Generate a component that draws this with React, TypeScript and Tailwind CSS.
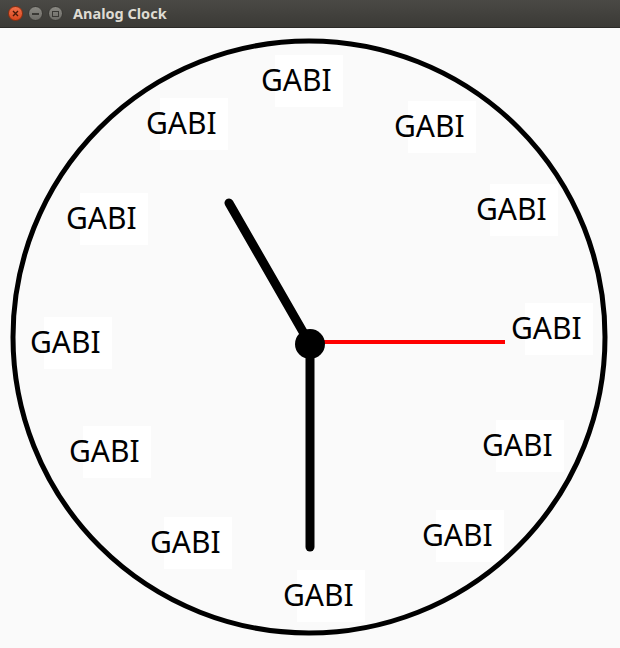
const labels = [
  { x: 263, y: 91 },
  { x: 396, y: 137 },
  { x: 478, y: 220 },
  { x: 513, y: 339 },
  { x: 484, y: 456 },
  { x: 424, y: 546 },
  { x: 285, y: 606 },
  { x: 152, y: 553 },
  { x: 71, y: 462 },
  { x: 32, y: 353 },
  { x: 68, y: 229 },
  { x: 148, y: 134 },
]

function TitleBar() {
  return (
    <div className="h-[28px] flex items-center bg-gradient-to-b from-[#4a4945] to-[#3b3a36] border-b border-[#2b2a27]">
      <div className="flex items-center gap-[5px] pl-[8px]">
        <div className="w-[15px] h-[15px] rounded-full bg-gradient-to-b from-[#f0704a] to-[#d8461b] border border-[#8e2e0e] flex items-center justify-center">
          <svg width="7" height="7" viewBox="0 0 7 7">
            <path d="M1 1L6 6M6 1L1 6" stroke="#4a1a08" strokeWidth="1.4" />
          </svg>
        </div>
        <div className="w-[15px] h-[15px] rounded-full bg-gradient-to-b from-[#8a8983] to-[#6d6c67] border border-[#3a3935] flex items-center justify-center">
          <div className="w-[7px] h-[2px] bg-[#3a3935]" />
        </div>
        <div className="w-[15px] h-[15px] rounded-full bg-gradient-to-b from-[#8a8983] to-[#6d6c67] border border-[#3a3935] flex items-center justify-center">
          <div className="w-[7px] h-[6px] border border-[#3a3935]" />
        </div>
      </div>
      <span className="ml-[10px] text-[14.5px] font-bold text-[#dfdbd2] font-['Noto_Sans',sans-serif]">
        Analog Clock
      </span>
    </div>
  )
}

export default function App() {
  return (
    <div className="w-[620px] h-[648px] bg-[#fafafa] flex flex-col overflow-hidden">
      <TitleBar />
      <svg width="620" height="620" viewBox="0 28 620 620" className="block">
        {/* faint white patches behind the labels */}
        {labels.map((l, i) => (
          <rect key={i} x={l.x + 12} y={l.y - 36} width={68} height={52} fill="#ffffff" />
        ))}
        <circle cx="309" cy="337" r="296" fill="none" stroke="#000" strokeWidth="5" />
        {labels.map((l, i) => (
          <text
            key={i}
            x={l.x - 2}
            y={l.y}
            fontSize="30"
            fill="#000"
            style={{ fontFamily: '"Noto Sans", sans-serif' }}
          >
            GABI
          </text>
        ))}
        {/* hour hand */}
        <line x1="310" y1="344" x2="229" y2="203" stroke="#000" strokeWidth="9" strokeLinecap="round" />
        {/* minute hand */}
        <line x1="310" y1="344" x2="310" y2="547" stroke="#000" strokeWidth="9" strokeLinecap="round" />
        {/* second hand */}
        <line x1="310" y1="342" x2="505" y2="342" stroke="#ff0000" strokeWidth="4" />
        <circle cx="310" cy="344" r="15" fill="#000" />
      </svg>
    </div>
  )
}
